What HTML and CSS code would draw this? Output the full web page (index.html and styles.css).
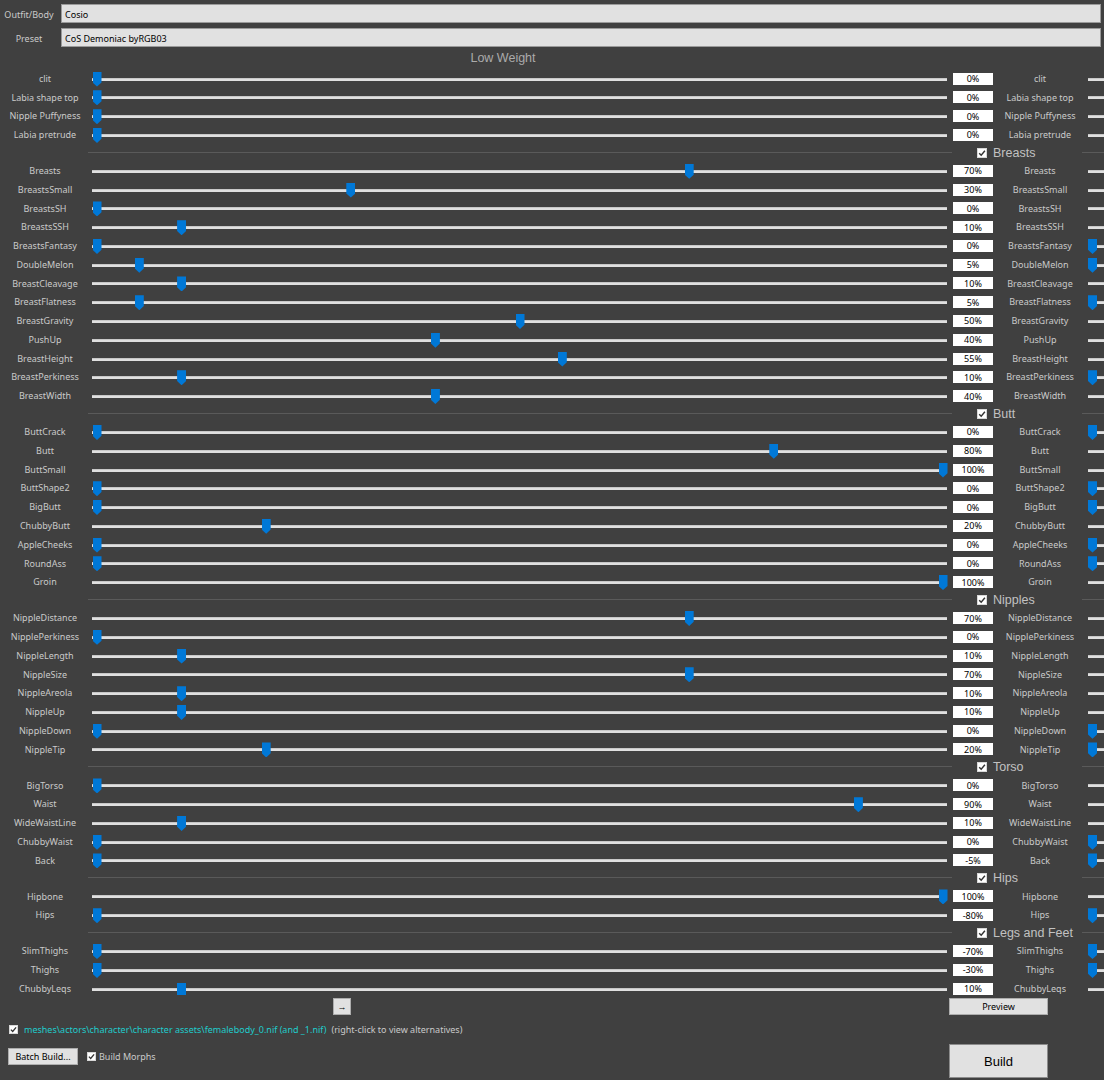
FILE: index.html
```html
<!DOCTYPE html>
<html>
<head>
<meta charset="utf-8">
<title>BodySlide</title>
<link rel="stylesheet" href="styles.css">
</head>
<body>
<div class="top">
  <span class="top-l">Outfit/Body</span><div class="field">Cosio</div>
  <span class="top-l">Preset</span><div class="field">CoS Demoniac byRGB03</div>
</div>
<div class="title">Low Weight</div>

<div class="row"><span class="lbl">clit</span><div class="sl"><i class="th" style="--v:0"></i></div><span class="val">0%</span><span class="lbl">clit</span><div class="sl sl-r"></div></div>
<div class="row"><span class="lbl">Labia shape top</span><div class="sl"><i class="th" style="--v:0"></i></div><span class="val">0%</span><span class="lbl">Labia shape top</span><div class="sl sl-r"></div></div>
<div class="row"><span class="lbl">Nipple Puffyness</span><div class="sl"><i class="th" style="--v:0"></i></div><span class="val">0%</span><span class="lbl">Nipple Puffyness</span><div class="sl sl-r"></div></div>
<div class="row"><span class="lbl">Labia pretrude</span><div class="sl"><i class="th" style="--v:0"></i></div><span class="val">0%</span><span class="lbl">Labia pretrude</span><div class="sl sl-r"></div></div>

<div class="sec"><span></span><span class="rule"></span><span class="sec-t"><svg class="chk" viewBox="0 0 10 10"><rect x="0.5" y="0.5" width="9" height="9" fill="#fff" stroke="#d8d8d8"/><path d="M2.2 5.2 L4.2 7.3 L7.9 2.8" fill="none" stroke="#333" stroke-width="1.4"/></svg>Breasts</span><span class="rule"></span></div>
<div class="row"><span class="lbl">Breasts</span><div class="sl"><i class="th" style="--v:70"></i></div><span class="val">70%</span><span class="lbl">Breasts</span><div class="sl sl-r"></div></div>
<div class="row"><span class="lbl">BreastsSmall</span><div class="sl"><i class="th" style="--v:30"></i></div><span class="val">30%</span><span class="lbl">BreastsSmall</span><div class="sl sl-r"></div></div>
<div class="row"><span class="lbl">BreastsSH</span><div class="sl"><i class="th" style="--v:0"></i></div><span class="val">0%</span><span class="lbl">BreastsSH</span><div class="sl sl-r"></div></div>
<div class="row"><span class="lbl">BreastsSSH</span><div class="sl"><i class="th" style="--v:10"></i></div><span class="val">10%</span><span class="lbl">BreastsSSH</span><div class="sl sl-r"></div></div>
<div class="row"><span class="lbl">BreastsFantasy</span><div class="sl"><i class="th" style="--v:0"></i></div><span class="val">0%</span><span class="lbl">BreastsFantasy</span><div class="sl sl-r"><i class="th"></i></div></div>
<div class="row"><span class="lbl">DoubleMelon</span><div class="sl"><i class="th" style="--v:5"></i></div><span class="val">5%</span><span class="lbl">DoubleMelon</span><div class="sl sl-r"><i class="th"></i></div></div>
<div class="row"><span class="lbl">BreastCleavage</span><div class="sl"><i class="th" style="--v:10"></i></div><span class="val">10%</span><span class="lbl">BreastCleavage</span><div class="sl sl-r"></div></div>
<div class="row"><span class="lbl">BreastFlatness</span><div class="sl"><i class="th" style="--v:5"></i></div><span class="val">5%</span><span class="lbl">BreastFlatness</span><div class="sl sl-r"><i class="th"></i></div></div>
<div class="row"><span class="lbl">BreastGravity</span><div class="sl"><i class="th" style="--v:50"></i></div><span class="val">50%</span><span class="lbl">BreastGravity</span><div class="sl sl-r"></div></div>
<div class="row"><span class="lbl">PushUp</span><div class="sl"><i class="th" style="--v:40"></i></div><span class="val">40%</span><span class="lbl">PushUp</span><div class="sl sl-r"></div></div>
<div class="row"><span class="lbl">BreastHeight</span><div class="sl"><i class="th" style="--v:55"></i></div><span class="val">55%</span><span class="lbl">BreastHeight</span><div class="sl sl-r"></div></div>
<div class="row"><span class="lbl">BreastPerkiness</span><div class="sl"><i class="th" style="--v:10"></i></div><span class="val">10%</span><span class="lbl">BreastPerkiness</span><div class="sl sl-r"><i class="th"></i></div></div>
<div class="row"><span class="lbl">BreastWidth</span><div class="sl"><i class="th" style="--v:40"></i></div><span class="val">40%</span><span class="lbl">BreastWidth</span><div class="sl sl-r"></div></div>

<div class="sec"><span></span><span class="rule"></span><span class="sec-t"><svg class="chk" viewBox="0 0 10 10"><rect x="0.5" y="0.5" width="9" height="9" fill="#fff" stroke="#d8d8d8"/><path d="M2.2 5.2 L4.2 7.3 L7.9 2.8" fill="none" stroke="#333" stroke-width="1.4"/></svg>Butt</span><span class="rule"></span></div>
<div class="row"><span class="lbl">ButtCrack</span><div class="sl"><i class="th" style="--v:0"></i></div><span class="val">0%</span><span class="lbl">ButtCrack</span><div class="sl sl-r"><i class="th"></i></div></div>
<div class="row"><span class="lbl">Butt</span><div class="sl"><i class="th" style="--v:80"></i></div><span class="val">80%</span><span class="lbl">Butt</span><div class="sl sl-r"></div></div>
<div class="row"><span class="lbl">ButtSmall</span><div class="sl"><i class="th" style="--v:100"></i></div><span class="val">100%</span><span class="lbl">ButtSmall</span><div class="sl sl-r"></div></div>
<div class="row"><span class="lbl">ButtShape2</span><div class="sl"><i class="th" style="--v:0"></i></div><span class="val">0%</span><span class="lbl">ButtShape2</span><div class="sl sl-r"><i class="th"></i></div></div>
<div class="row"><span class="lbl">BigButt</span><div class="sl"><i class="th" style="--v:0"></i></div><span class="val">0%</span><span class="lbl">BigButt</span><div class="sl sl-r"><i class="th"></i></div></div>
<div class="row"><span class="lbl">ChubbyButt</span><div class="sl"><i class="th" style="--v:20"></i></div><span class="val">20%</span><span class="lbl">ChubbyButt</span><div class="sl sl-r"></div></div>
<div class="row"><span class="lbl">AppleCheeks</span><div class="sl"><i class="th" style="--v:0"></i></div><span class="val">0%</span><span class="lbl">AppleCheeks</span><div class="sl sl-r"><i class="th"></i></div></div>
<div class="row"><span class="lbl">RoundAss</span><div class="sl"><i class="th" style="--v:0"></i></div><span class="val">0%</span><span class="lbl">RoundAss</span><div class="sl sl-r"><i class="th"></i></div></div>
<div class="row"><span class="lbl">Groin</span><div class="sl"><i class="th" style="--v:100"></i></div><span class="val">100%</span><span class="lbl">Groin</span><div class="sl sl-r"></div></div>

<div class="sec"><span></span><span class="rule"></span><span class="sec-t"><svg class="chk" viewBox="0 0 10 10"><rect x="0.5" y="0.5" width="9" height="9" fill="#fff" stroke="#d8d8d8"/><path d="M2.2 5.2 L4.2 7.3 L7.9 2.8" fill="none" stroke="#333" stroke-width="1.4"/></svg>Nipples</span><span class="rule"></span></div>
<div class="row"><span class="lbl">NippleDistance</span><div class="sl"><i class="th" style="--v:70"></i></div><span class="val">70%</span><span class="lbl">NippleDistance</span><div class="sl sl-r"></div></div>
<div class="row"><span class="lbl">NipplePerkiness</span><div class="sl"><i class="th" style="--v:0"></i></div><span class="val">0%</span><span class="lbl">NipplePerkiness</span><div class="sl sl-r"></div></div>
<div class="row"><span class="lbl">NippleLength</span><div class="sl"><i class="th" style="--v:10"></i></div><span class="val">10%</span><span class="lbl">NippleLength</span><div class="sl sl-r"></div></div>
<div class="row"><span class="lbl">NippleSize</span><div class="sl"><i class="th" style="--v:70"></i></div><span class="val">70%</span><span class="lbl">NippleSize</span><div class="sl sl-r"></div></div>
<div class="row"><span class="lbl">NippleAreola</span><div class="sl"><i class="th" style="--v:10"></i></div><span class="val">10%</span><span class="lbl">NippleAreola</span><div class="sl sl-r"></div></div>
<div class="row"><span class="lbl">NippleUp</span><div class="sl"><i class="th" style="--v:10"></i></div><span class="val">10%</span><span class="lbl">NippleUp</span><div class="sl sl-r"></div></div>
<div class="row"><span class="lbl">NippleDown</span><div class="sl"><i class="th" style="--v:0"></i></div><span class="val">0%</span><span class="lbl">NippleDown</span><div class="sl sl-r"><i class="th"></i></div></div>
<div class="row"><span class="lbl">NippleTip</span><div class="sl"><i class="th" style="--v:20"></i></div><span class="val">20%</span><span class="lbl">NippleTip</span><div class="sl sl-r"><i class="th"></i></div></div>

<div class="sec"><span></span><span class="rule"></span><span class="sec-t"><svg class="chk" viewBox="0 0 10 10"><rect x="0.5" y="0.5" width="9" height="9" fill="#fff" stroke="#d8d8d8"/><path d="M2.2 5.2 L4.2 7.3 L7.9 2.8" fill="none" stroke="#333" stroke-width="1.4"/></svg>Torso</span><span class="rule"></span></div>
<div class="row"><span class="lbl">BigTorso</span><div class="sl"><i class="th" style="--v:0"></i></div><span class="val">0%</span><span class="lbl">BigTorso</span><div class="sl sl-r"></div></div>
<div class="row"><span class="lbl">Waist</span><div class="sl"><i class="th" style="--v:90"></i></div><span class="val">90%</span><span class="lbl">Waist</span><div class="sl sl-r"></div></div>
<div class="row"><span class="lbl">WideWaistLine</span><div class="sl"><i class="th" style="--v:10"></i></div><span class="val">10%</span><span class="lbl">WideWaistLine</span><div class="sl sl-r"></div></div>
<div class="row"><span class="lbl">ChubbyWaist</span><div class="sl"><i class="th" style="--v:0"></i></div><span class="val">0%</span><span class="lbl">ChubbyWaist</span><div class="sl sl-r"><i class="th"></i></div></div>
<div class="row"><span class="lbl">Back</span><div class="sl"><i class="th" style="--v:0"></i></div><span class="val">-5%</span><span class="lbl">Back</span><div class="sl sl-r"><i class="th"></i></div></div>

<div class="sec"><span></span><span class="rule"></span><span class="sec-t"><svg class="chk" viewBox="0 0 10 10"><rect x="0.5" y="0.5" width="9" height="9" fill="#fff" stroke="#d8d8d8"/><path d="M2.2 5.2 L4.2 7.3 L7.9 2.8" fill="none" stroke="#333" stroke-width="1.4"/></svg>Hips</span><span class="rule"></span></div>
<div class="row"><span class="lbl">Hipbone</span><div class="sl"><i class="th" style="--v:100"></i></div><span class="val">100%</span><span class="lbl">Hipbone</span><div class="sl sl-r"></div></div>
<div class="row"><span class="lbl">Hips</span><div class="sl"><i class="th" style="--v:0"></i></div><span class="val">-80%</span><span class="lbl">Hips</span><div class="sl sl-r"><i class="th"></i></div></div>

<div class="sec"><span></span><span class="rule"></span><span class="sec-t"><svg class="chk" viewBox="0 0 10 10"><rect x="0.5" y="0.5" width="9" height="9" fill="#fff" stroke="#d8d8d8"/><path d="M2.2 5.2 L4.2 7.3 L7.9 2.8" fill="none" stroke="#333" stroke-width="1.4"/></svg>Legs and Feet</span><span class="rule"></span></div>
<div class="row"><span class="lbl">SlimThighs</span><div class="sl"><i class="th" style="--v:0"></i></div><span class="val">-70%</span><span class="lbl">SlimThighs</span><div class="sl sl-r"><i class="th"></i></div></div>
<div class="row"><span class="lbl">Thighs</span><div class="sl"><i class="th" style="--v:0"></i></div><span class="val">-30%</span><span class="lbl">Thighs</span><div class="sl sl-r"><i class="th"></i></div></div>
<div class="row"><span class="lbl">ChubbyLeqs</span><div class="sl"><i class="th th-flat" style="--v:10"></i></div><span class="val">10%</span><span class="lbl">ChubbyLeqs</span><div class="sl sl-r"></div></div>

<div class="actions">
  <span></span>
  <div><button class="btn arrow-btn">&rarr;</button></div>
  <div><button class="btn preview">Preview</button></div>
</div>

<div class="footer">
  <div class="footer-l">
    <div class="path">
      <svg class="chk-s" viewBox="0 0 9 9"><rect x="0.5" y="0.5" width="8" height="8" fill="#fff" stroke="#d8d8d8"/><path d="M1.9 4.6 L3.7 6.5 L7.1 2.4" fill="none" stroke="#333" stroke-width="1.3"/></svg>
      <span class="path-main">meshes\actors\character\character assets\femalebody_0.nif (and _1.nif)</span>
      <span class="path-hint">(right-click to view alternatives)</span>
    </div>
    <div class="batch-row">
      <button class="btn batch">Batch Build...</button>
      <svg class="chk-s morph-chk" viewBox="0 0 9 9"><rect x="0.5" y="0.5" width="8" height="8" fill="#fff" stroke="#d8d8d8"/><path d="M1.9 4.6 L3.7 6.5 L7.1 2.4" fill="none" stroke="#333" stroke-width="1.3"/></svg>
      <span class="morph-lbl">Build Morphs</span>
    </div>
  </div>
  <div><button class="btn build">Build</button></div>
</div>
</body>
</html>
```
FILE: styles.css
```css
html, body {
  margin: 0;
  padding: 0;
}
body {
  width: 1104px;
  height: 1080px;
  overflow: hidden;
  background: #404040;
  font-family: "Noto Sans", "Open Sans", sans-serif;
  font-size: 9px;
  color: #cacaca;
}

/* top fields */
.top {
  display: grid;
  grid-template-columns: 61px 1040px;
  grid-auto-rows: 19px;
  row-gap: 5px;
  padding-top: 4px;
}
.top-l {
  width: 58px;
  text-align: center;
  line-height: 21px;
  white-space: nowrap;
}
.field {
  height: 19px;
  box-sizing: border-box;
  background: #e1e1e1;
  border: 1px solid #9a9a9a;
  color: #000;
  padding: 1px 0 0 3px;
  line-height: 17px;
}

.title {
  height: 21.6px;
  box-sizing: border-box;
  padding: 1px 98px 0 0;
  line-height: 20px;
  text-align: center;
  font-family: "Liberation Sans", Arial, sans-serif;
  font-size: 12.5px;
  color: #ababab;
}

/* slider rows */
.row {
  display: grid;
  grid-template-columns: 90px 858px 46px 92px 18px;
  grid-template-rows: 18.77px;
  height: 18.77px;
}
.lbl {
  text-align: center;
  line-height: 18.77px;
  padding-top: 1.2px;
  white-space: nowrap;
}
.sl {
  position: relative;
}
.sl::before {
  content: "";
  position: absolute;
  left: 2px;
  right: 1px;
  top: 9px;
  height: 3px;
  background: #e0e0e0;
  border-top: 1px solid #c8c8c8;
  box-sizing: border-box;
}
.sl-r::before {
  right: -4px;
}
.th {
  position: absolute;
  top: 3px;
  left: calc(2.5px + var(--v, 0) * 8.46px);
  width: 9px;
  height: 15px;
  background: #0078d7;
  clip-path: polygon(0 0, 100% 0, 100% 72%, 50% 100%, 0 72%);
}
.sl-r .th {
  left: 2px;
}
.th-flat {
  top: 4px;
  height: 12px;
  clip-path: none;
}
.val {
  margin: 4px 1px 0 5px;
  height: 12px;
  background: #fff;
  color: #000;
  text-align: center;
  line-height: 12px;
  padding-top: 0.5px;
  box-sizing: border-box;
}

/* section headers */
.sec {
  display: grid;
  grid-template-columns: 88px 864px 130px 22px;
  grid-template-rows: 17.2px;
  height: 17.2px;
  align-items: center;
}
.rule {
  height: 1px;
  background: #5a5a5a;
}
.sec-t {
  display: flex;
  align-items: center;
  gap: 6px;
  padding-left: 25px;
  font-family: "Liberation Sans", Arial, sans-serif;
  font-size: 12.5px;
  color: #c2c2c2;
  white-space: nowrap;
  position: relative;
  top: 0.5px;
}
.chk {
  width: 10px;
  height: 10px;
  flex: none;
}

/* buttons */
.btn {
  box-sizing: border-box;
  margin: 0;
  padding: 0;
  background: #e1e1e1;
  border: 1px solid #adadad;
  color: #000;
  font-family: "Noto Sans", "Open Sans", sans-serif;
  font-size: 9px;
  display: block;
}
.actions {
  display: grid;
  grid-template-columns: 90px 858px 156px;
  height: 17px;
  margin-top: 0.6px;
}
.arrow-btn {
  margin-left: 243px;
  width: 18px;
  height: 17px;
  line-height: 14px;
}
.preview {
  margin-left: 1px;
  width: 99px;
  height: 17px;
  line-height: 14px;
}

.footer {
  display: grid;
  grid-template-columns: 949px 99px;
}
.footer-l {
  padding-top: 9px;
}
.path {
  display: flex;
  align-items: center;
  height: 10px;
  padding-left: 9px;
  white-space: nowrap;
}
.chk-s {
  width: 9px;
  height: 9px;
  flex: none;
}
.path-main {
  margin-left: 6px;
  color: #1fcccc;
}
.path-hint {
  margin-left: 5px;
  color: #cacaca;
}
.batch-row {
  display: flex;
  align-items: center;
  margin-top: 14px;
  padding-left: 8px;
}
.batch {
  width: 70px;
  height: 17px;
  line-height: 14px;
}
.morph-chk {
  margin-left: 9px;
}
.morph-lbl {
  margin-left: 3px;
}
.build {
  margin-top: 29px;
  width: 99px;
  height: 34px;
  font-family: "Liberation Sans", Arial, sans-serif;
  font-size: 13px;
  border-color: #8c8c8c;
}
```
